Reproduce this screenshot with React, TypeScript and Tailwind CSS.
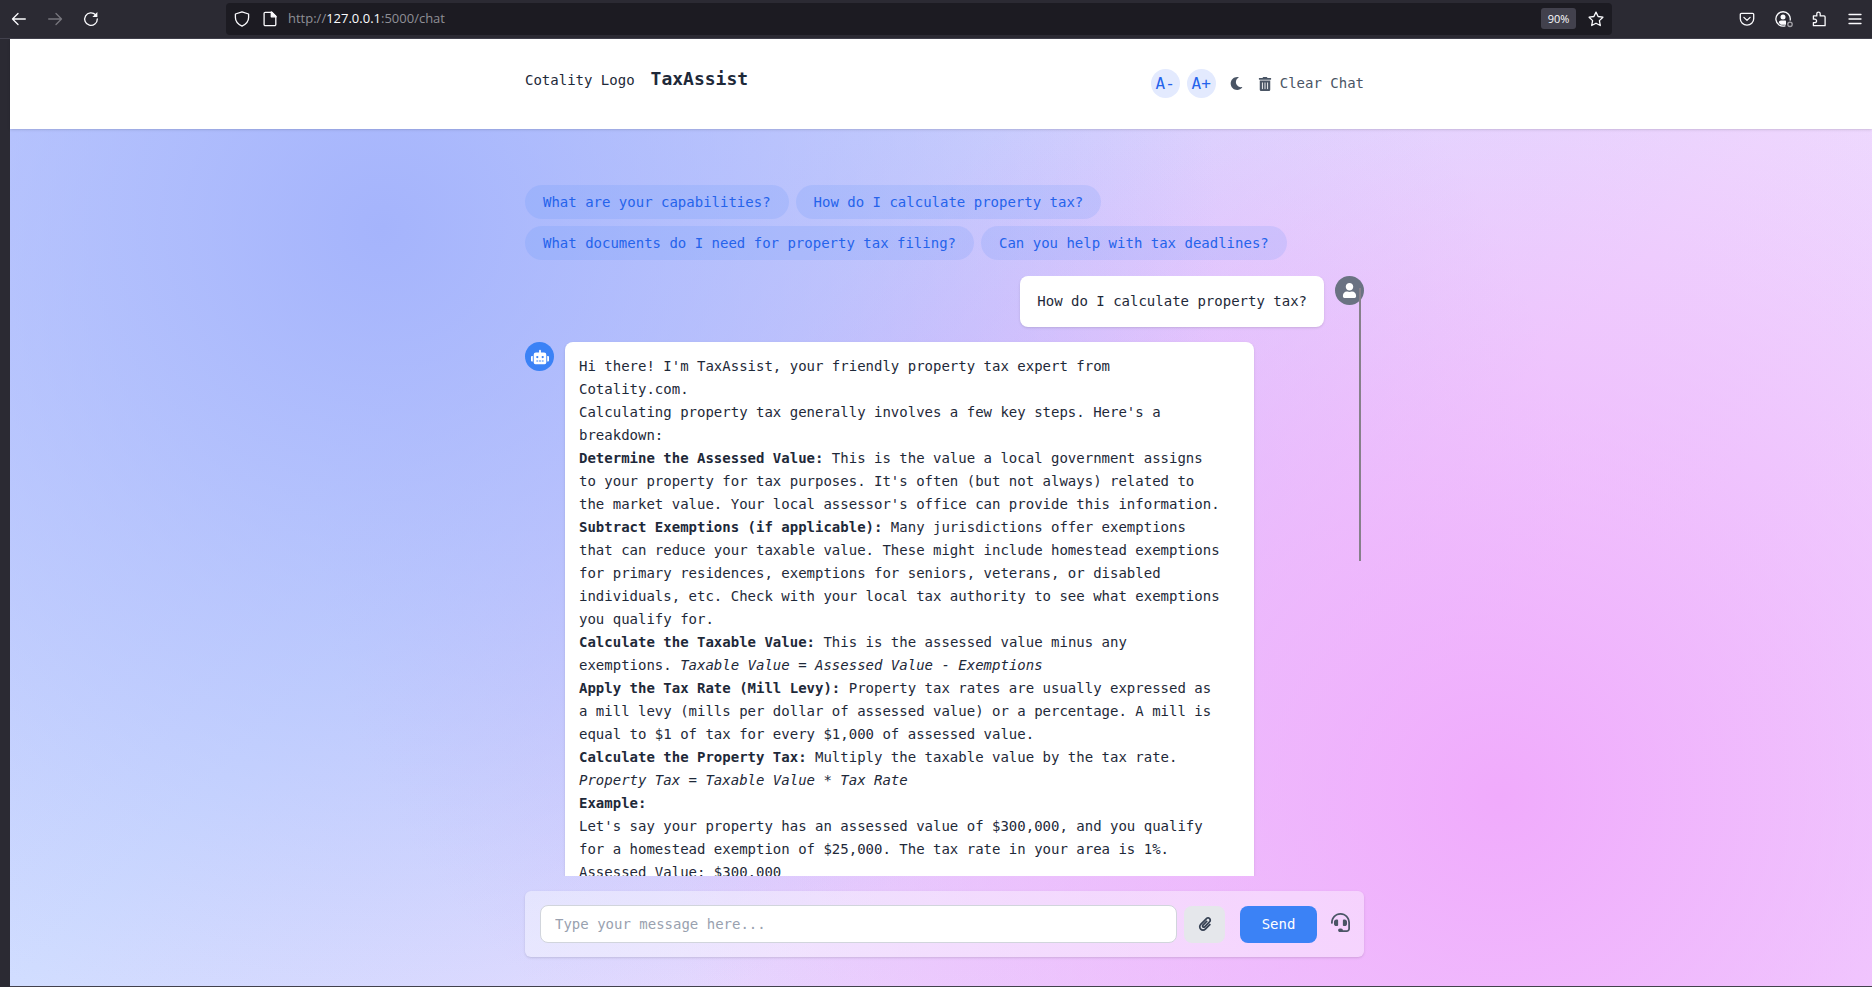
import type { ReactNode } from "react";
import { FaMoon, FaPaperclip, FaRobot, FaUser, FaTrashAlt, FaHeadset } from "react-icons/fa";

const suggestions = [
  "What are your capabilities?",
  "How do I calculate property tax?",
  "What documents do I need for property tax filing?",
  "Can you help with tax deadlines?",
];

function Icon({ children, className = "" }: { children: ReactNode; className?: string }) {
  return (
    <svg
      viewBox="0 0 16 16"
      className={`size-4 shrink-0 ${className}`}
      fill="none"
      stroke="currentColor"
      strokeWidth="1.3"
      strokeLinecap="round"
      strokeLinejoin="round"
      aria-hidden="true"
    >
      {children}
    </svg>
  );
}

function BrowserBar() {
  return (
    <div className="flex h-[39px] shrink-0 items-center border-b border-[#42414d] bg-[#2b2a33] pb-px text-[#fbfbfe]">
      <div className="flex w-[226px] shrink-0 items-center gap-5 pl-[11px]">
        <button type="button" aria-label="Back">
          <Icon>
            <path d="M14.3 8H1.5M7 2.5 1.5 8 7 13.5" />
          </Icon>
        </button>
        <button type="button" aria-label="Forward" className="text-[#77767e]">
          <Icon>
            <path d="M1.7 8h12.8M9 2.5 14.5 8 9 13.5" />
          </Icon>
        </button>
        <button type="button" aria-label="Reload">
          <Icon>
            <path d="M12.6 3.8A6.3 6.3 0 1 0 14.3 8" />
            <path d="M14.4 1v5H9.4z" fill="currentColor" stroke="none" />
          </Icon>
        </button>
      </div>
      <div className="flex h-8 w-[1386px] items-center rounded bg-[#1c1b22] pr-2 pl-2">
        <Icon>
          <path d="M8 .9 14.6 3v3.6c0 3.500-2.300 6.600-6.600 8.600C3.700 13.200 1.400 10.100 1.400 6.600V3z" />
        </Icon>
        <Icon className="ml-3">
          <path d="M3.300 1.300h6.500l4 4v8.200a1.200 1.200 0 0 1-1.200 1.200H3.300a1.200 1.200 0 0 1-1.200-1.200v-11a1.200 1.200 0 0 1 1.200-1.200z" />
          <path d="M9.300 1v4.800h4.800z" fill="currentColor" />
        </Icon>
        <span className="ml-[10px] flex-1 font-['Open_Sans',sans-serif] text-[13px] text-[#8f8f96]">
          http://<span className="text-[#fbfbfe]">127.0.0.1</span>:5000/chat
        </span>
        <button type="button" className="flex h-[21px] w-[35px] items-center justify-center rounded-[3px] bg-[#42414d] font-['Open_Sans',sans-serif] text-[11px] leading-5">
          90%
        </button>
        <button type="button" aria-label="Bookmark this page" className="ml-3">
          <Icon>
            <path d="m8 1.100 2.100 4.400 4.800.7-3.500 3.400.9 4.900L8 12.200l-4.300 2.300.9-4.900L1.100 6.200l4.800-.7z" />
          </Icon>
        </button>
      </div>
      <div className="ml-auto flex items-center gap-5 pr-[9px]">
        <button type="button" aria-label="Save to Pocket">
          <Icon>
            <path d="M2.500 2.300h11a1.200 1.200 0 0 1 1.200 1.200v4.200a6.700 6.500 0 0 1-13.400 0V3.500a1.200 1.200 0 0 1 1.200-1.200z" />
            <path d="M4.900 6.400 8 9.400l3.100-3" />
          </Icon>
        </button>
        <button type="button" aria-label="Account">
          <Icon className="overflow-visible">
            <path d="M10 14.900A7.200 7.200 0 1 1 15.200 9" />
            <circle cx="8" cy="6" r="2.500" fill="currentColor" stroke="none" />
            <path d="M3.800 11.800c0-1.600 1-2.300 2.200-2.300h4c.8 0 1 .3 1 1v3.300H5.800z" fill="currentColor" stroke="none" />
            <circle cx="15" cy="13.300" r="2.200" stroke="#a3a2a8" />
          </Icon>
        </button>
        <button type="button" aria-label="Extensions">
          <Icon>
            <path d="M2.400 6.200V4.900h3.400V2.800a1.700 1.700 0 0 1 3.400 0v2.100h3.900a1 1 0 0 1 1 1v8.800H2.400v-3h1.400a1.500 1.500 0 0 0 0-3.500H2.400z" />
          </Icon>
        </button>
        <button type="button" aria-label="Menu">
          <Icon>
            <path d="M2 3.500h12M2 8h12M2 12.500h12" />
          </Icon>
        </button>
      </div>
    </div>
  );
}

function Header() {
  return (
    <header className="relative z-10 h-[90px] shrink-0 bg-white pl-[7px] shadow-sm">
      <div className="mx-auto flex w-full max-w-[839px] items-start justify-between pt-[30px]">
        <div className="flex h-5 items-baseline gap-4">
          <span>Cotality Logo</span>
          <h1 className="text-[18px] leading-5 font-bold">TaxAssist</h1>
        </div>
        <div className="flex h-[29px] items-center text-gray-600">
          <button type="button" className="size-[29px] rounded-full bg-[#e3eafe] text-[16px] text-[#2563eb]">
            A-
          </button>
          <button type="button" className="ml-[7px] size-[29px] rounded-full bg-[#e3eafe] text-[16px] text-[#2563eb]">
            A+
          </button>
          <button type="button" aria-label="Toggle dark mode" className="ml-[14px] text-[13px]">
            <FaMoon />
          </button>
          <button type="button" className="ml-[15px] flex items-center gap-2">
            <FaTrashAlt />
            Clear Chat
          </button>
        </div>
      </div>
    </header>
  );
}

function BotAnswer() {
  return (
    <div className="flex items-start gap-[11px]">
      <span className="flex size-[29px] shrink-0 items-center justify-center rounded-full bg-[#3b82f6] text-[18px] text-white">
        <FaRobot />
      </span>
      <div className="max-w-[689px] rounded-lg bg-white py-[13px] pr-[30px] pl-[14px] shadow-sm">
        <p>Hi there! I'm TaxAssist, your friendly property tax expert from Cotality.com.</p>
        <p>Calculating property tax generally involves a few key steps. Here's a breakdown:</p>
        <p>
          <strong>Determine the Assessed Value:</strong> This is the value a local government assigns to your property
          for tax purposes. It's often (but not always) related to the market value. Your local assessor's office can
          provide this information.
        </p>
        <p>
          <strong>Subtract Exemptions (if applicable):</strong> Many jurisdictions offer exemptions that can reduce
          your taxable value. These might include homestead exemptions for primary residences, exemptions for seniors,
          veterans, or disabled individuals, etc. Check with your local tax authority to see what exemptions you
          qualify for.
        </p>
        <p>
          <strong>Calculate the Taxable Value:</strong> This is the assessed value minus any exemptions.{" "}
          <em>Taxable Value = Assessed Value - Exemptions</em>
        </p>
        <p>
          <strong>Apply the Tax Rate (Mill Levy):</strong> Property tax rates are usually expressed as a mill levy
          (mills per dollar of assessed value) or a percentage. A mill is equal to $1 of tax for every $1,000 of
          assessed value.
        </p>
        <p>
          <strong>Calculate the Property Tax:</strong> Multiply the taxable value by the tax rate.{" "}
          <em>Property Tax = Taxable Value * Tax Rate</em>
        </p>
        <p>
          <strong>Example:</strong>
        </p>
        <p>
          Let's say your property has an assessed value of $300,000, and you qualify for a homestead exemption of
          $25,000. The tax rate in your area is 1%.
        </p>
        <p>Assessed Value: $300,000</p>
      </div>
    </div>
  );
}

function Composer() {
  return (
    <form
      className="mt-[15px] mb-[29px] flex h-[66px] shrink-0 items-center rounded-md bg-white/40 pr-[14px] pl-[15px] shadow-sm"
      onSubmit={(event) => event.preventDefault()}
    >
      <input
        type="text"
        aria-label="Message"
        placeholder="Type your message here..."
        className="h-[38px] min-w-0 flex-1 rounded-lg border border-gray-300 bg-white px-[14px] placeholder:text-gray-400"
      />
      <button
        type="button"
        aria-label="Attach file"
        className="ml-[7px] flex h-[37px] w-[41px] items-center justify-center rounded-lg bg-gray-200 text-gray-700"
      >
        <FaPaperclip />
      </button>
      <button type="submit" className="ml-[15px] h-[37px] w-[77px] rounded-lg bg-[#3b82f6] text-white">
        Send
      </button>
      <button type="button" aria-label="Contact support" className="ml-[14px] pb-1 text-[19px] text-gray-600">
        <FaHeadset />
      </button>
    </form>
  );
}

export default function App() {
  return (
    <div className="flex h-screen flex-col overflow-hidden bg-[#2b2a33] font-['DejaVu_Sans_Mono','Liberation_Mono',monospace] text-[14px] leading-[23px] text-gray-800">
      <BrowserBar />
      <div className="ml-[10px] flex min-h-0 flex-1 flex-col border-b border-[#42414d] bg-[radial-gradient(circle_at_20%_20%,#a5b4fc_0%,transparent_50%),radial-gradient(circle_at_80%_80%,#f0abfc_0%,transparent_50%),radial-gradient(circle_at_50%_50%,#c99cf766_0%,#c99cf700_60%),linear-gradient(135deg,#c7d2fe_0%,#d1ddff_34%,#eddcfe_66%,#f0dfff_100%)]">
        <Header />
        <main className="flex min-h-0 flex-1 flex-col pl-[7px]">
          <div className="mx-auto flex min-h-0 w-full max-w-[839px] flex-1 flex-col pt-14">
            <div className="flex flex-wrap gap-[7px]">
              {suggestions.map((text) => (
                <button
                  key={text}
                  type="button"
                  className="h-[34px] rounded-full bg-[#3b82f6]/13 px-[18px] text-[#2563eb]"
                >
                  {text}
                </button>
              ))}
            </div>
            <div className="relative mt-4 flex min-h-0 flex-1 flex-col gap-[15px] overflow-hidden">
              <div className="flex items-start justify-end gap-[11px]">
                <p className="rounded-lg bg-white px-[17px] py-[14px] shadow-sm">How do I calculate property tax?</p>
                <span className="flex size-[29px] shrink-0 items-center justify-center rounded-full bg-gray-500 text-[15px] text-white">
                  <FaUser />
                </span>
              </div>
              <BotAnswer />
              <div className="absolute top-3 right-[3px] h-[273px] w-[2px] bg-[#86808a]" />
            </div>
            <Composer />
          </div>
        </main>
      </div>
    </div>
  );
}
